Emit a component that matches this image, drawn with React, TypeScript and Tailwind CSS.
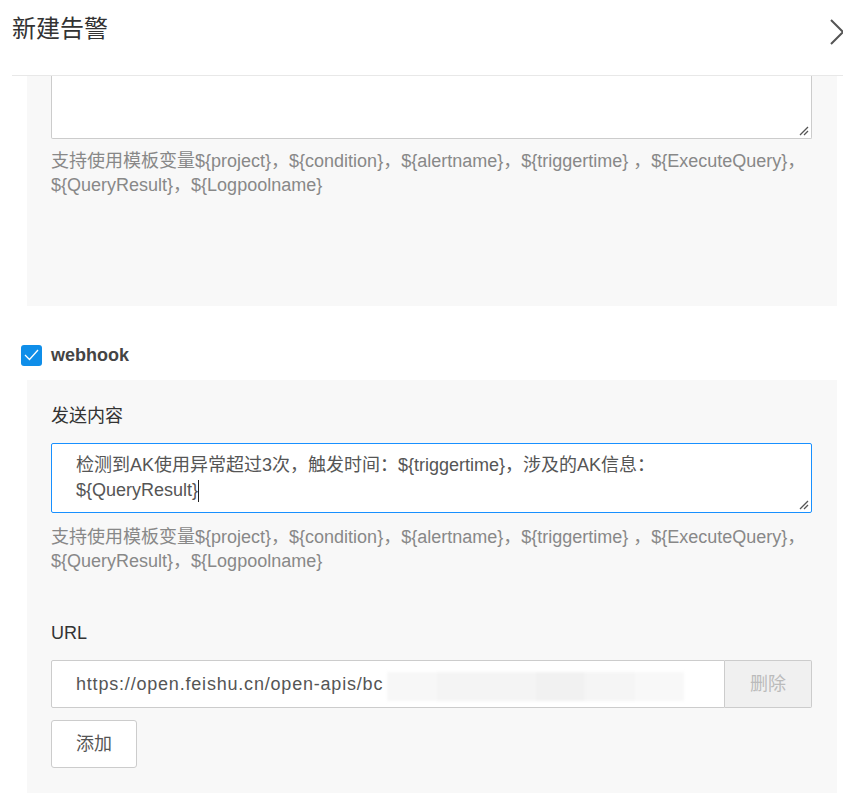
import React from "react";

const vars =
  "支持使用模板变量${project}，${condition}，${alertname}，${triggertime} ，${ExecuteQuery}，";
const vars2 = "${QueryResult}，${Logpoolname}";

const Hint = () => (
  <div className="text-[18px] leading-[24px] text-[#888]">
    <p>{vars}</p>
    <p>{vars2}</p>
  </div>
);

const Grip = () => (
  <svg className="absolute right-[2px] bottom-[2px]" width="10" height="10" viewBox="0 0 10 10">
    <path d="M1 9 L9 1 M5 9 L9 5" stroke="#555" strokeWidth="1.3" />
  </svg>
);

const App = () => {
  return (
    <div className="w-[843px] h-[793px] overflow-hidden bg-white font-['Liberation_Sans','Noto_Sans_CJK_SC',sans-serif]">
      <header className="flex justify-between items-start pl-3 h-[75px]">
        <h1 className="text-[24px] leading-[30px] pt-[14px] text-[#333]">新建告警</h1>
        <svg className="mt-[19px] mr-[-4px]" width="18" height="26" viewBox="0 0 18 26">
          <path d="M2 1 L14 13 L2 25" fill="none" stroke="#555" strokeWidth="2" />
        </svg>
      </header>
      <div className="ml-3 border-t border-[#e8e8e8]" />

      <div className="pl-[27px] pr-[6px]">
        {/* 短信 / 邮件 模板 */}
        <section className="bg-[#f8f8f8] h-[230px] pl-6 pr-[25px]">
          <div className="relative h-[63px] bg-white border border-t-0 border-[#ccc] rounded-b-[2px]">
            <Grip />
          </div>
          <div className="mt-[10px]">
            <Hint />
          </div>
        </section>

        <label className="flex items-center gap-[9px] h-[24px] mt-[37px] ml-[-6px]">
          <span className="w-[21px] h-[21px] rounded-[3px] bg-[#0f8ee9] flex items-center justify-center">
            <svg width="15" height="12" viewBox="0 0 15 12">
              <path d="M1 6 L5.5 10.5 L14 1" fill="none" stroke="#fff" strokeWidth="1.3" />
            </svg>
          </span>
          <span className="text-[18px] font-bold text-[#444]">webhook</span>
        </label>

        <section className="bg-[#f8f8f8] mt-[13px] h-[420px] pl-6 pr-[25px] pt-6">
          <p className="text-[18px] leading-[24px] text-[#333]">发送内容</p>
          <div className="relative mt-[15px] h-[70px] bg-white border border-[#1890ff] rounded-[2px] pl-6 pt-[9px] text-[18px] leading-[25px] text-[#555]">
            <p>检测到AK使用异常超过3次，触发时间：${"{triggertime}"}，涉及的AK信息：</p>
            <p className="flex items-center">
              ${"{QueryResult}"}
              <span className="inline-block w-px h-[22px] bg-[#222]" />
            </p>
            <Grip />
          </div>
          <div className="mt-[12px]">
            <Hint />
          </div>

          <p className="mt-[48px] text-[18px] leading-[24px] text-[#333]">URL</p>
          <div className="flex mt-[15px] h-[48px]">
            <div className="relative flex-1 flex items-center bg-white border border-[#ccc] rounded-l-[2px] pl-6 text-[18px] text-[#555] overflow-hidden">
              <span className="tracking-[0.8px]">https://open.feishu.cn/open-apis/bc</span>
              {/* masked token */}
              <div className="absolute left-[335px] top-[11px] w-[297px] h-[29px] flex blur-[1.5px]">
                <span className="flex-1 bg-[#f7f7f7]" />
                <span className="flex-[2] bg-[#f4f4f4]" />
                <span className="flex-1 bg-[#f1f1f1]" />
                <span className="flex-1 bg-[#f5f5f5]" />
                <span className="flex-1 bg-[#f8f8f8]" />
              </div>
            </div>
            <button className="w-[87px] border border-l-0 border-[#ccc] bg-[#f0f0f0] text-[18px] text-[#bbb] rounded-r-[2px]">
              删除
            </button>
          </div>
          <button className="mt-[12px] w-[86px] h-[48px] bg-white border border-[#ccc] rounded-[3px] text-[18px] text-[#555]">
            添加
          </button>
        </section>
      </div>
    </div>
  );
};

export default App;
